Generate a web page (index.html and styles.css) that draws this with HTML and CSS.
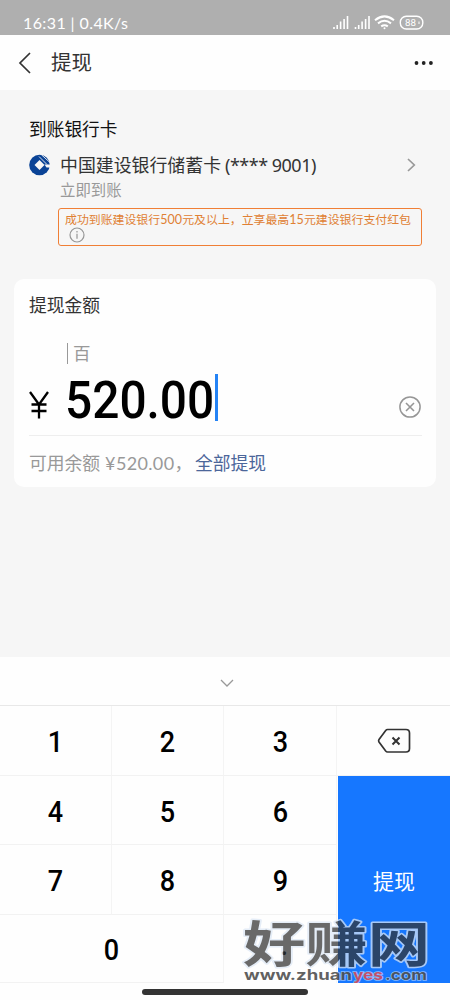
FILE: index.html
```html
<!DOCTYPE html>
<html lang="zh-CN">
<head>
<meta charset="utf-8">
<title>提现</title>
<link rel="stylesheet" href="styles.css">
</head>
<body>
<div class="screen">
  <div class="status">
    <span class="status-text">16:31 | 0.4K/s</span>
    <svg class="status-icons" width="94" height="18" viewBox="0 0 94 18" fill="none" stroke="#fff">
      <g stroke-width="1.6"><path d="M2 15v-2M5.200 15v-4M8.600 15V7.500M12.100 15V5M15.500 15V2"/><path d="M23.500 15v-2M26.700 15v-4M30.100 15V7.500M33.600 15V5M37 15V2"/></g>
      <g stroke-width="2"><path d="M43 6.200Q52.500 -1.500 62 6.200M46 9.400Q52.500 4.200 59 9.400M49.200 12.400Q52.500 10 55.800 12.400"/></g>
      <circle cx="52.500" cy="14.300" r="1" fill="#fff" stroke="none"/>
      <rect x="68.300" y="2.300" width="22.500" height="12.700" rx="6" stroke-width="1.400"/>
      <text class="battery" x="73" y="12.300" textLength="11" lengthAdjust="spacingAndGlyphs">88</text>
      <path d="M87 7.500v2.500" stroke-width="1"/>
    </svg>
  </div>
  <header class="nav">
    <svg class="back" width="14" height="22" viewBox="0 0 14 22" fill="none" stroke="#333" stroke-width="1.700"><path d="M12 1L2 11L12 21"/></svg>
    <h1 class="title">提现</h1>
    <svg class="more" width="20" height="6" viewBox="0 0 20 6" fill="#222"><circle cx="2.500" cy="3" r="1.900"/><circle cx="9.700" cy="3" r="1.900"/><circle cx="16.900" cy="3" r="1.900"/></svg>
  </header>
  <main class="content">
    <section class="bank">
      <h2 class="bank-heading">到账银行卡</h2>
      <div class="bank-row">
        <svg width="22" height="22" viewBox="0 0 22 22"><circle cx="10.500" cy="11" r="10.300" fill="#0a4396"/><path d="M10.500 6L15.500 11L10.500 16L5.500 11Z" fill="#f6f6f6"/><path d="M15.500 10.500H22V13.500H17.500Z" fill="#f6f6f6"/><path d="M10 2.500L18 10.500M12.500 .8L21.500 9" stroke="#f6f6f6" stroke-width=".9"/></svg>
        <span class="bank-name">中国建设银行储蓄卡 <span class="number">(**** 9001)</span></span>
        <svg class="chevron" width="9" height="14" viewBox="0 0 9 14" fill="none" stroke="#999" stroke-width="1.700"><path d="M1 1L7.300 7L1 13"/></svg>
      </div>
      <p class="arrival">立即到账</p>
      <div class="promo">
        <p class="promo-text">成功到账建设银行<span class="promo-number">500</span>元及以上，立享最高<span class="promo-number">15</span>元建设银行支付红包</p>
        <svg class="info" width="16" height="16" viewBox="0 0 16 16" fill="none" stroke="#969696"><circle cx="8" cy="8" r="7" stroke-width="1.200"/><path d="M8 6.700v5M8 4.100v1.300" stroke-width="1.200"/></svg>
      </div>
    </section>
    <section class="card">
      <h2 class="card-heading">提现金额</h2>
      <div class="unit">百</div>
      <div class="amount-row">
        <svg class="yen" width="20" height="28" viewBox="0 0 20 28" fill="none" stroke="#000" stroke-width="2.300"><path d="M1 1L10 13.500L19 1M10 13V27.500M2.500 13.500H17.500M2.500 20H17.500"/></svg>
        <div class="amount"><span class="digits">520.00</span></div>
        <span class="caret"></span>
        <svg class="clear" width="24" height="24" viewBox="0 0 24 24" fill="none" stroke="#969696" stroke-width="1.500"><circle cx="12" cy="12" r="10.100"/><path d="M8 8L16 16M16 8L8 16" stroke-width="1.600"/></svg>
      </div>
      <div class="balance"><span class="available">可用余额 <span class="sum">¥520.00</span>，</span><a class="all">全部提现</a></div>
    </section>
  </main>
  <section class="keyboard">
    <div class="collapse"><svg width="14" height="8" viewBox="0 0 14 8" fill="none" stroke="#999" stroke-width="1.300"><path d="M1 1L7 7L13 1"/></svg></div>
    <div class="keys">
      <div class="key"><span>1</span></div><div class="key"><span>2</span></div><div class="key"><span>3</span></div>
      <div class="key delete"><svg width="34" height="26" viewBox="0 0 34 26" fill="none" stroke="#333" stroke-width="1.700"><path d="M10.500 1.500H29Q32.500 1.500 32.500 5V20.500Q32.500 24 29 24H10.500Q9.500 24 8.700 23L2 14Q1.200 12.700 2 11.500L8.700 2.500Q9.500 1.500 10.500 1.500Z"/><path d="M15.500 9.500L22.500 16.500M22.500 9.500L15.500 16.500" stroke-width="2"/></svg></div>
      <div class="key"><span>4</span></div><div class="key"><span>5</span></div><div class="key"><span>6</span></div>
      <div class="submit">提现</div>
      <div class="key"><span>7</span></div><div class="key"><span>8</span></div><div class="key"><span>9</span></div>
      <div class="key zero"><span>0</span></div><div class="key dot"><span>.</span></div>
    </div>
    <div class="home"><span class="home-bar"></span></div>
  </section>
  <svg class="watermark" width="192" height="76" viewBox="0 -8 192 76">
    <g class="mark-name"><text x="3" y="44" textLength="187" lengthAdjust="spacingAndGlyphs">好赚网</text></g>
    <text class="mark-url" x="4" y="62" textLength="108" lengthAdjust="spacingAndGlyphs">www.zhuan</text>
    <text class="mark-url mark-red" x="113" y="62" textLength="30" lengthAdjust="spacingAndGlyphs">yes</text>
    <text class="mark-url" x="145" y="62" textLength="42" lengthAdjust="spacingAndGlyphs">.com</text>
  </svg>
</div>
</body>
</html>
```
FILE: styles.css
```css
* { box-sizing: border-box; }
body { margin: 0; font-family: "Noto Sans CJK SC", sans-serif; color: #333; }
h1, h2, p { margin: 0; font-weight: 400; }
svg { flex: none; display: block; }
.screen { position: relative; width: 450px; height: 1000px; display: flex; flex-direction: column; overflow: hidden; background: #f6f6f6; }
.status { height: 35px; background: #afafaf; display: flex; justify-content: space-between; padding: 12px 24px 0 23px; color: #fff; }
.status-text { font: 16px/22px Lato, sans-serif; letter-spacing: .4px; white-space: pre; }
.status-icons { margin-top: 2px; }
.battery { font: 9.5px Roboto, sans-serif; fill: #fff; stroke: none; }
.nav { height: 55px; background: #fefefe; display: flex; align-items: center; padding: 0 16px 0 18px; }
.title { margin: -3px 0 0 19px; font-size: 20.5px; line-height: 30px; }
.more { margin-left: auto; }
.content { height: 567px; padding: 25px 14px 0; }
.bank { padding: 0 14px 0 15px; height: 164px; }
.bank-heading { font-size: 17.7px; line-height: 26px; color: #111; }
.bank-row { display: flex; align-items: center; height: 26px; margin-top: 11px; }
.bank-name { margin: -2px 0 0 9px; font-size: 17.9px; line-height: 26px; white-space: nowrap; }
.number { font-family: "Noto Sans", sans-serif; font-size: 18px; letter-spacing: -.5px; }
.chevron { margin-left: auto; margin-right: 6px; }
.arrival { margin: 0 0 0 31px; font-size: 15.4px; line-height: 22px; color: #999; }
.promo { margin: 8px 0 0 29px; width: 364px; height: 38px; border: 1.5px solid #f07f35; border-radius: 3px; padding: 1px 0 0 6px; }
.promo-text { font-size: 11.9px; line-height: 18px; color: #e08033; white-space: nowrap; }
.promo-number { font-family: Lato, sans-serif; font-size: 12.500px; letter-spacing: .1px; }
.info { margin: -2px 0 0 4px; }
.card { height: 208px; border-radius: 10px; background: #fefefe; padding: 12px 14px 0 15px; }
.card-heading { font-size: 17.8px; line-height: 26px; }
.unit { margin: 26px 0 0 38px; padding-left: 5px; width: max-content; height: 21px; border-left: 1px solid #999; font-size: 17.500px; line-height: 20px; color: #999; }
.amount-row { display: flex; height: 72px; border-bottom: 1px solid #eee; }
.yen { margin-top: 27px; }
.amount { margin-left: 16px; width: 150px; padding-top: 7px; }
.digits { display: block; width: max-content; font: 500 52px/60px Roboto, sans-serif; color: #000; transform: scaleX(.92); transform-origin: left; }
.caret { width: 3px; height: 47px; margin-top: 10px; background: #2483f5; }
.clear { margin: 31px 0 0 auto; }
.balance { padding-top: 13px; font-size: 17.800px; line-height: 26px; display: flex; white-space: nowrap; }
.available { width: 166px; color: #999; }
.sum { font-family: Lato, sans-serif; font-size: 18px; letter-spacing: .35px; margin-left: 1px; }
.all { color: #4c669a; }
.keyboard { height: 343px; background: #fefefe; }
.collapse { height: 48px; display: flex; align-items: center; justify-content: center; padding: 4px 0 0 4px; }
.keys { display: grid; grid-template-columns: 112px 112px 113px 113px; grid-template-rows: 70px 69px 70px 68px; border-top: 1px solid #e8e8e8; }
.key { display: flex; align-items: center; justify-content: center; border-right: 1px solid #f4f4f4; border-bottom: 1px solid #f2f2f2; font: 500 30px/40px Roboto, sans-serif; color: #000; padding: 3px 0 0 1px; }
.key span { transform: scaleX(.9); }
.delete { border-right: 0; padding: 0; }
.zero { grid-column: span 2; }
.dot { padding: 0 0 8px 8px; border-bottom: 0; }
.submit { grid-column: 4; grid-row: 2 / 5; margin-left: 1px; background: #1677ff; color: #fff; font-size: 21px; display: flex; align-items: center; justify-content: center; }
.home { height: 17px; display: flex; justify-content: center; padding-top: 6px; }
.home-bar { width: 166px; height: 6px; border-radius: 3px; background: #333; }
.watermark { position: absolute; left: 240px; top: 910px; }
.mark-name { font: 700 49px "Noto Sans CJK SC", sans-serif; fill: #333; stroke: #dce7f5; stroke-width: 3px; paint-order: stroke; stroke-linejoin: round; opacity: .73; }
.mark-url { font: 700 14px Inter, "DejaVu Sans", sans-serif; fill: #444; fill-opacity: .85; stroke: #fff; stroke-opacity: .5; stroke-width: 1.500px; paint-order: stroke; }
.mark-red { fill: #cf3f51; }
```
